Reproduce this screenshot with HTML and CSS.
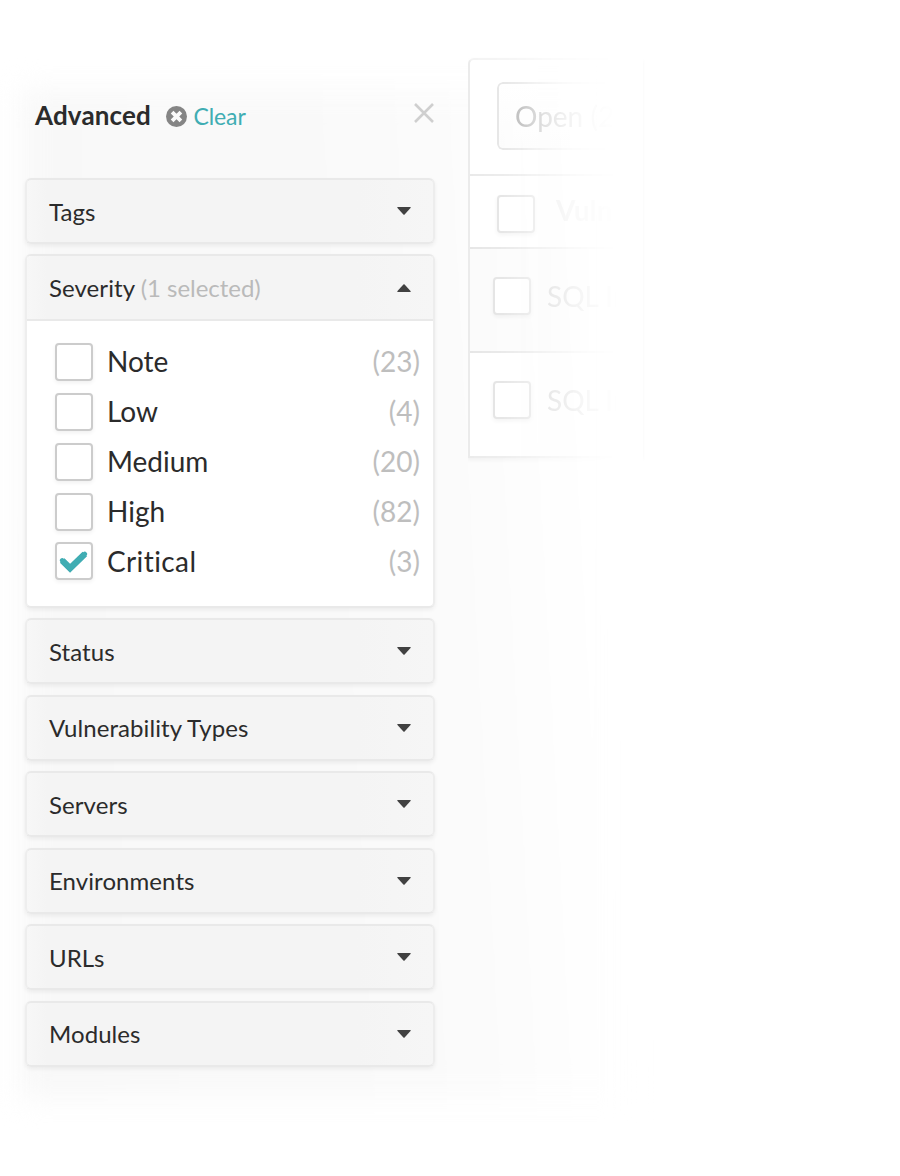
FILE: index.html
```html
<!DOCTYPE html>
<html lang="en">
<head>
<meta charset="utf-8">
<title>Advanced filters</title>
<link rel="stylesheet" href="styles.css">
</head>
<body>
<div class="haze"></div>
<main class="layout">
  <aside class="filters">
    <header class="head">
      <h1 class="title">Advanced</h1>
      <a class="clear"><svg class="clear-icon" viewBox="0 0 21 21"><circle cx="10.5" cy="10.5" r="10.5" fill="#858585"/><path d="M6.100 6.100l8.800 8.800M14.900 6.100l-8.800 8.800" stroke="#fafafa" stroke-width="3.800"/></svg><span>Clear</span></a>
      <svg class="close" viewBox="0 0 20 20"><path d="M1 1l18 18M19 1L1 19" stroke="#cfcfcf" stroke-width="2.600"/></svg>
    </header>
    <section class="item"><div class="bar"><span>Tags</span><svg class="caret" viewBox="0 0 14 8"><path d="M.8 0h12.4q1 .3.3 1.100L7.600 7.500q-.6.5-1.200 0L.5 1.100Q-.2.3.8 0z"/></svg></div></section>
    <section class="item item-open">
      <div class="bar"><span>Severity <span class="muted">(1 selected)</span></span><svg class="caret caret-up" viewBox="0 0 14 8"><path d="M.8 0h12.4q1 .3.3 1.100L7.600 7.500q-.6.5-1.200 0L.5 1.100Q-.2.3.8 0z"/></svg></div>
      <ul class="options">
        <li class="option"><span class="box"></span><span class="label">Note</span><span class="count">(23)</span></li>
        <li class="option"><span class="box"></span><span class="label">Low</span><span class="count">(4)</span></li>
        <li class="option"><span class="box"></span><span class="label">Medium</span><span class="count">(20)</span></li>
        <li class="option"><span class="box"></span><span class="label">High</span><span class="count">(82)</span></li>
        <li class="option"><span class="box box-checked"><svg class="check" viewBox="0 0 28 22"><path d="M3.100 10l7.600 7.600L24.900 3.800" fill="none" stroke="#40adb3" stroke-width="6.200"/><path d="M3.100 10l7.600 7.600L24.900 3.800" fill="none" stroke="#40adb3" stroke-width="4.500" stroke-linecap="round"/></svg></span><span class="label label-wide">Critical</span><span class="count">(3)</span></li>
      </ul>
    </section>
    <section class="item"><div class="bar"><span>Status</span><svg class="caret" viewBox="0 0 14 8"><path d="M.8 0h12.4q1 .3.3 1.100L7.600 7.500q-.6.5-1.200 0L.5 1.100Q-.2.3.8 0z"/></svg></div></section>
    <section class="item"><div class="bar"><span>Vulnerability Types</span><svg class="caret" viewBox="0 0 14 8"><path d="M.8 0h12.4q1 .3.3 1.100L7.600 7.500q-.6.5-1.200 0L.5 1.100Q-.2.3.8 0z"/></svg></div></section>
    <section class="item"><div class="bar"><span>Servers</span><svg class="caret" viewBox="0 0 14 8"><path d="M.8 0h12.4q1 .3.3 1.100L7.600 7.500q-.6.5-1.200 0L.5 1.100Q-.2.3.8 0z"/></svg></div></section>
    <section class="item"><div class="bar"><span>Environments</span><svg class="caret" viewBox="0 0 14 8"><path d="M.8 0h12.4q1 .3.3 1.100L7.600 7.500q-.6.5-1.200 0L.5 1.100Q-.2.3.8 0z"/></svg></div></section>
    <section class="item"><div class="bar"><span>URLs</span><svg class="caret" viewBox="0 0 14 8"><path d="M.8 0h12.4q1 .3.3 1.100L7.600 7.500q-.6.5-1.200 0L.5 1.100Q-.2.3.8 0z"/></svg></div></section>
    <section class="item"><div class="bar"><span>Modules</span><svg class="caret" viewBox="0 0 14 8"><path d="M.8 0h12.4q1 .3.3 1.100L7.600 7.500q-.6.5-1.200 0L.5 1.100Q-.2.3.8 0z"/></svg></div></section>
  </aside>
  <section class="results">
    <div class="row row-select"><div class="select">Open (2</div></div>
    <div class="row row-head"><span class="box"></span><span class="col-name">Vuln</span></div>
    <div class="row row-tint"><span class="box"></span><span>SQL In</span></div>
    <div class="row"><span class="box"></span><span>SQL In</span></div>
  </section>
</main>
</body>
</html>
```

FILE: styles.css
```css
* { box-sizing: border-box; }
body {
  margin: 0;
  width: 900px;
  height: 1176px;
  overflow: hidden;
  position: relative;
  background: #fff;
  color: #2b2b2b;
  font-family: Lato, sans-serif;
  font-variant-ligatures: none;
}
/* soft tint behind both panels */
.haze {
  position: absolute;
  inset: 90px 270px 78px 20px;
  background: linear-gradient(87deg, #f8f8f8 0, #f9f9f9 48%, #fbfbfb 70%, #fefefe 86%, #fff 92%);
  filter: blur(14px);
}
.layout {
  position: relative;
  display: flex;
  align-items: flex-start;
  gap: 33px;
  padding-left: 25px;
}
.filters {
  width: 410px;
  padding-top: 95px;
  display: flex;
  flex-direction: column;
  gap: 10.450px;
}
.head {
  display: flex;
  align-items: center;
  height: 40px;
  margin-bottom: 32.600px;
  padding-left: 10px;
}
.title { margin: 0; font-size: 26px; font-weight: 700; line-height: 40px; letter-spacing: .15px; }
.clear {
  display: flex;
  align-items: center;
  gap: 6px;
  margin-left: 15.500px;
  font-size: 23px;
  letter-spacing: -.1px;
  color: #40adb3;
}
.clear-icon { width: 21px; height: 21px; margin-top: 2px; }
.clear span { padding-top: 2px; }
.close { width: 20px; height: 20px; margin: 0 1px 5px auto; }
.item {
  height: 66px;
  border: 2px solid #e9e9e9;
  border-left-color: #eee;
  border-right-color: #ededed;
  border-radius: 6px;
  background: linear-gradient(90deg, #f7f7f7, #f4f4f4 20px, #f4f4f4 330px, #f6f6f6);
  box-shadow: 0 2px 4px rgba(0, 0, 0, .06);
}
.item-open { height: 353.500px; background: #fff; overflow: hidden; }
.bar {
  height: 62px;
  display: flex;
  align-items: center;
  justify-content: space-between;
  padding: 0 22px;
  font-size: 24px;
  letter-spacing: .07px;
}
.item-open .bar {
  height: 65px;
  border-bottom: 2px solid #e9e9e9;
  background: linear-gradient(90deg, #f7f7f7, #f4f4f4 20px, #f4f4f4 330px, #f6f6f6);
}
.muted { color: #bababa; letter-spacing: -.04px; }
.caret { width: 14px; height: 8px; fill: #414141; }
.caret-up { transform: rotate(180deg); }
.options { list-style: none; margin: 0; padding: 15.500px 13px 0 28px; }
.option {
  height: 50px;
  display: flex;
  align-items: center;
  gap: 14px;
  font-size: 28px;
}
.label, .option .count { padding-bottom: 1px; }
.label-wide { letter-spacing: .4px; }
.box {
  flex: none;
  width: 38px;
  height: 38px;
  border: 2px solid #ccc;
  border-radius: 4px;
  background: #fff;
  box-shadow: 0 2px 4px rgba(0, 0, 0, .06);
}
.box-checked { display: grid; place-items: center; margin-bottom: 1.500px; }
.check { width: 29px; height: 23px; margin-left: -1px; }
.count { margin-left: auto; color: #bebebe; }
.results {
  margin-top: 58px;
  width: 175px;
  height: 400px;
  white-space: nowrap;
  border: 2px solid #ebebeb;
  border-top-color: #f3f3f3;
  border-right: 0;
  border-radius: 6px 0 0 0;
  background: #fff;
  box-shadow: -1px 2px 4px rgba(0, 0, 0, .05);
  -webkit-mask-image: linear-gradient(90deg, #000 0, rgba(0, 0, 0, .85) 35px, rgba(0, 0, 0, .38) 82px, rgba(0, 0, 0, .13) 120px, transparent 150px);
  mask-image: linear-gradient(90deg, #000 0, rgba(0, 0, 0, .85) 35px, rgba(0, 0, 0, .38) 82px, rgba(0, 0, 0, .13) 120px, transparent 150px);
  -webkit-mask-clip: no-clip;
  mask-clip: no-clip;
}
.row {
  height: 104px;
  display: flex;
  align-items: center;
  gap: 16px;
  padding: 0 0 8px 23px;
  border-bottom: 2px solid #e6e6e6;
  font-size: 28px;
  color: #c8c8c8;
}
.row > span:last-child { padding-bottom: 1px; }
.row:last-child { border-bottom: 0; height: 103px; padding-bottom: 9px; }
.row .box { border-color: #e2e2e2; }
.row-select { height: 116px; padding: 0 0 2px 27px; border-color: #e9e9e9; }
.select {
  width: 140px;
  height: 68px;
  padding: 0 16px;
  border: 2px solid #e3e3e3;
  border-radius: 6px;
  line-height: 65px;
  background: linear-gradient(#fff, #fcfcfc);
  color: #aaa;
  -webkit-mask-image: linear-gradient(90deg, #000 25px, rgba(0, 0, 0, .5) 80px, rgba(0, 0, 0, .3) 115px);
  mask-image: linear-gradient(90deg, #000 25px, rgba(0, 0, 0, .5) 80px, rgba(0, 0, 0, .3) 115px);
}
.row-head { height: 73px; padding: 0 0 0 27px; gap: 21px; color: #e6e6e6; font-weight: 700; }
.row-head .box { margin-top: 4px; }
.row > .col-name:last-child { padding-bottom: 4px; }
.row-tint { background: #fbfbfb; }
```
